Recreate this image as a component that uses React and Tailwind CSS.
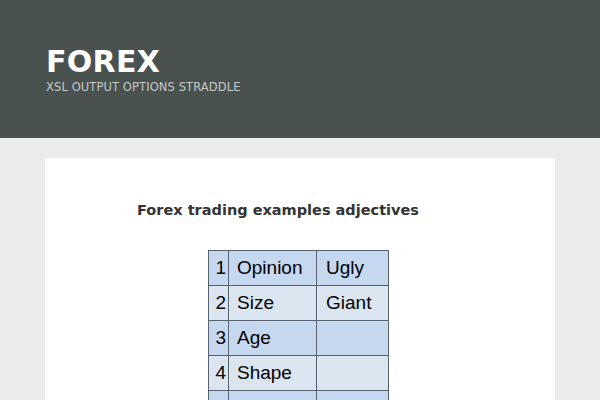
export default function App() {
    const rows = [
        ["1", "Opinion", "Ugly"],
        ["2", "Size", "Giant"],
        ["3", "Age", ""],
        ["4", "Shape", ""],
        ["5", "Colour", "Blue"],
    ];

    return (
        <div className="h-[400px] w-[600px] overflow-hidden bg-[#ececec] font-['DejaVu_Sans',sans-serif]">
            {/* site header */}
            <header className="h-[138px] bg-[#4a5250] px-[46px] pt-[45px]">
                <h1 className="text-[30px] font-bold leading-[34px] tracking-[0.3px] text-white">FOREX</h1>
                <p className="mt-[1px] text-[11.5px] leading-[14px] tracking-[0.1px] text-[#c3c8c6]">
                    XSL OUTPUT OPTIONS STRADDLE
                </p>
            </header>

            <main className="px-[45px] pt-[20px]">
                <article className="h-[300px] bg-white pl-[92px] pt-[42px]">
                    <h2 className="text-[14.5px] font-bold leading-[20px] text-[#333333]">
                        Forex trading examples adjectives
                    </h2>

                    <table className="ml-[71px] mt-[30px] border-collapse font-['Liberation_Sans',Arial,sans-serif] text-[19px] text-black">
                        <tbody>
                            {rows.map((r, i) => (
                                <tr key={r[0]} className={i % 2 === 0 ? "bg-[#c5d8ef]" : "bg-[#dbe5f0]"}>
                                    <td className="h-[35px] w-[20px] border border-[#56626f] pr-[2px] text-right">{r[0]}</td>
                                    <td className="h-[35px] w-[88px] border border-[#56626f] pl-[8px]">{r[1]}</td>
                                    <td className="h-[35px] w-[72px] border border-[#56626f] pl-[9px]">{r[2]}</td>
                                </tr>
                            ))}
                        </tbody>
                    </table>
                </article>
            </main>
        </div>
    );
}
